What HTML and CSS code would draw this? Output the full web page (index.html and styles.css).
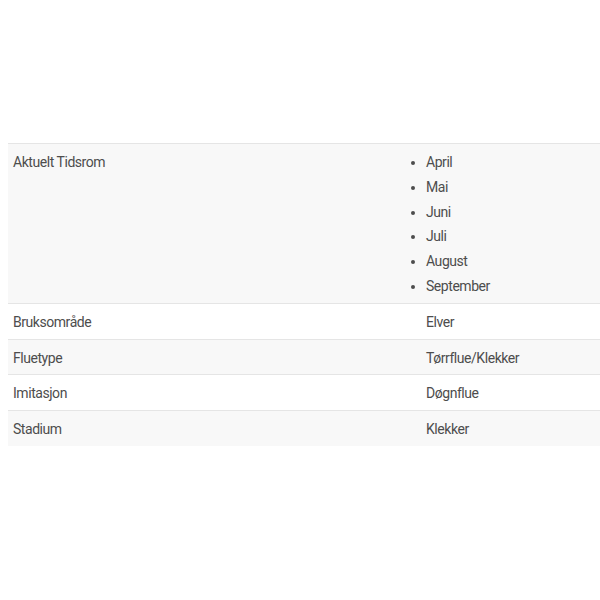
FILE: index.html
```html
<!DOCTYPE html>
<html lang="no">
<head>
<meta charset="utf-8">
<title>Egenskaper</title>
<link rel="stylesheet" href="styles.css">
</head>
<body>
<table class="specs">
  <tbody>
    <tr class="row alt">
      <th class="label">Aktuelt Tidsrom</th>
      <td class="value">
        <ul class="months">
          <li>April</li>
          <li>Mai</li>
          <li>Juni</li>
          <li>Juli</li>
          <li>August</li>
          <li>September</li>
        </ul>
      </td>
    </tr>
    <tr class="row">
      <th class="label">Bruksområde</th>
      <td class="value">Elver</td>
    </tr>
    <tr class="row alt">
      <th class="label">Fluetype</th>
      <td class="value">Tørrflue/Klekker</td>
    </tr>
    <tr class="row">
      <th class="label">Imitasjon</th>
      <td class="value">Døgnflue</td>
    </tr>
    <tr class="row alt">
      <th class="label">Stadium</th>
      <td class="value">Klekker</td>
    </tr>
  </tbody>
</table>
</body>
</html>
```
FILE: styles.css
```css
html, body {
  background: #ffffff;
}
body {
  margin: 0;
  padding: 143px 0 0 8px;
  font-family: "Roboto", "Liberation Sans", sans-serif;
  font-size: 14px;
  letter-spacing: -0.45px;
  color: #4d4d4d;
  overflow: hidden;
}
.specs {
  width: 600px;
  border-collapse: collapse;
  border-spacing: 0;
}
.row {
  background: #ffffff;
  border-top: 1px solid #e5e5e5;
}
.row.alt {
  background: #f8f8f8;
}
.label,
.value {
  text-align: left;
  font-weight: normal;
  vertical-align: top;
  padding: 6px 5px 4px 5px;
  line-height: 24.8px;
}
.label {
  width: 403px;
}
.months {
  margin: 0;
  padding: 0;
  list-style: disc outside;
}
```
